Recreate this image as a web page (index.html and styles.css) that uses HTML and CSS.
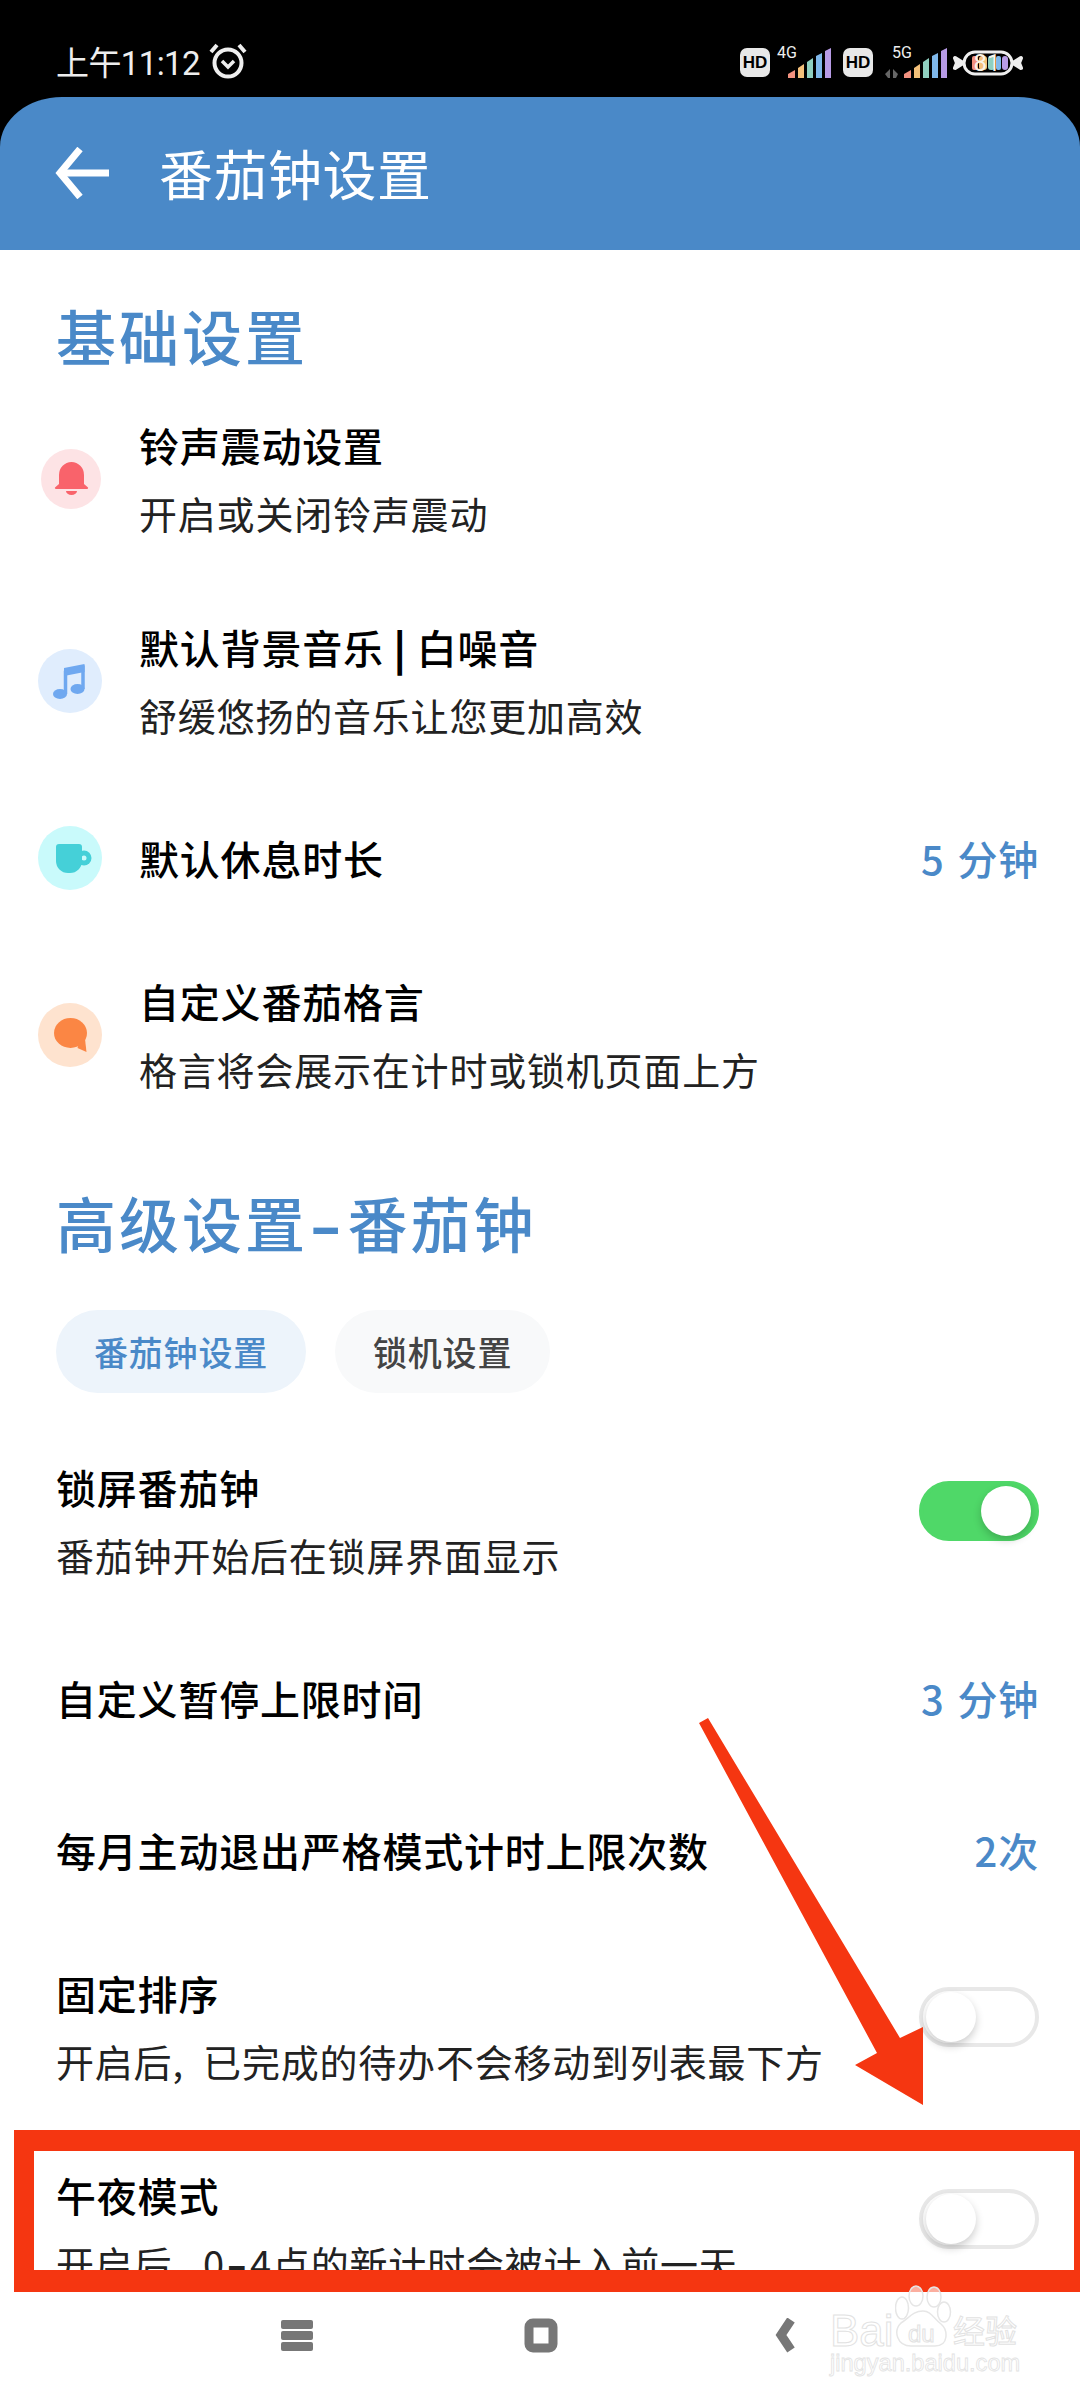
FILE: index.html
```html
<!DOCTYPE html>
<html lang="zh-CN">
<head>
    <meta charset="UTF-8">
    <meta name="viewport" content="width=device-width, initial-scale=1.0">
    <title>番茄钟设置</title>
    <link rel="stylesheet" href="styles.css">
</head>
<body>
    <div class="top">
        <div class="status-bar">
            <div class="status-left">
                <span class="clock">上午11:12</span>
                <svg class="alarm" width="40" height="38" viewBox="0 0 40 38" fill="none" stroke="#eee">
                    <circle cx="20" cy="21" r="13.5" stroke-width="4"/>
                    <path d="M14 19l6 6 6-6" stroke-width="3.5"/>
                    <path d="M3 10L9 3M37 10L31 3" stroke-width="4"/>
                </svg>
            </div>
            <div class="status-right">
                <span class="hd">HD</span>
                <div class="signal">
                    <span class="net">4G</span>
                    <svg width="54" height="30" viewBox="0 0 54 30">
                        <path d="M11 30v-4l7-4v8z" fill="#f2917f"/>
                        <path d="M21 30V20l6-4v14z" fill="#f4c07a"/>
                        <path d="M30 30V14l6-4v20z" fill="#8fd0c0"/>
                        <path d="M39 30V8l6-3v25z" fill="#7fb8ea"/>
                        <path d="M48 30V3l6-3v30z" fill="#b79be6"/>
                    </svg>
                </div>
                <span class="hd hd-second">HD</span>
                <div class="signal">
                    <span class="net net-five">5G</span>
                    <svg width="62" height="30" viewBox="0 0 62 30">
                        <path d="M0 26l5-5v9H3zM8 21l5 5-2 4H8z" fill="#666"/>
                        <path d="M19 30v-4l7-4v8z" fill="#f2917f"/>
                        <path d="M29 30V20l6-4v14z" fill="#f4c07a"/>
                        <path d="M38 30V14l6-4v20z" fill="#8fd0c0"/>
                        <path d="M47 30V8l6-3v25z" fill="#7fb8ea"/>
                        <path d="M56 30V3l6-3v30z" fill="#b79be6"/>
                    </svg>
                </div>
                <div class="battery">
                    <svg width="70" height="26" viewBox="0 0 70 26">
                        <path d="M10 13L2 8l2 5-2 5zM60 13l8-5-2 5 2 5z" fill="#eee" stroke="#eee" stroke-width="4" stroke-linejoin="round"/>
                        <rect x="11" y="2" width="48" height="22" rx="11" fill="#000" stroke="#eee" stroke-width="3"/>
                        <rect x="19" y="6" width="6" height="14" rx="2" fill="#f2917f"/>
                        <rect x="26" y="6" width="8" height="14" rx="3" fill="#f4c07a"/>
                        <rect x="35" y="6" width="7" height="14" rx="3" fill="#8fd0c0"/>
                        <rect x="43" y="6" width="5" height="14" rx="2" fill="#7fb8ea"/>
                        <rect x="49" y="6" width="6" height="14" rx="3" fill="#b79be6"/>
                        <text x="34" y="21" class="level">81</text>
                    </svg>
                </div>
            </div>
        </div>
        <div class="header">
            <svg width="54" height="52" viewBox="0 0 54 52" fill="none" stroke="#fff" stroke-width="7">
                <path d="M54 26H5"/>
                <path d="M25 2L5 26l20 24"/>
            </svg>
            <span class="header-title">番茄钟设置</span>
        </div>
    </div>

    <div class="content">
        <div class="section-title">基础设置</div>

        <div class="row row-icon">
            <svg class="icon" width="64" height="64" viewBox="0 0 64 64">
                <circle cx="33" cy="32" r="30" fill="#fde3e5"/>
                <path d="M21 37v-9a12.5 13 0 0 1 25 0v9l4 3.5a1 1 0 0 1-1 1.5H18a1 1 0 0 1-1-1.5z" fill="#f9636b"/>
                <path d="M28 44h11a5.5 4 0 0 1-11 0z" fill="#f9636b"/>
            </svg>
            <div class="row-text">
                <div class="row-title">铃声震动设置</div>
                <div class="row-sub">开启或关闭铃声震动</div>
            </div>
        </div>

        <div class="row row-icon">
            <svg class="icon" width="64" height="64" viewBox="0 0 64 64">
                <circle cx="32" cy="32" r="32" fill="#e0edfd"/>
                <ellipse cx="22" cy="45" rx="7" ry="5" fill="#6fa8f0"/>
                <ellipse cx="39.500" cy="40" rx="7" ry="5" fill="#6fa8f0"/>
                <path d="M27.500 45V23L45 18.500V40" fill="none" stroke="#6fa8f0" stroke-width="3.500"/>
                <path d="M26 19l20.500-4v8L26 27z" fill="#6fa8f0"/>
            </svg>
            <div class="row-text">
                <div class="row-title">默认背景音乐 <span class="pipe">|</span> 白噪音</div>
                <div class="row-sub">舒缓悠扬的音乐让您更加高效</div>
            </div>
        </div>

        <div class="row row-icon row-single">
            <svg class="icon" width="64" height="64" viewBox="0 0 64 64">
                <circle cx="32" cy="32" r="32" fill="#c9fafb"/>
                <circle cx="46" cy="32" r="7.500" fill="#45d0d8"/>
                <circle cx="46" cy="32" r="2.500" fill="#c9fafb"/>
                <path d="M18 21a3 3 0 0 1 3-3h20a3 3 0 0 1 3 3v14a12 12 0 0 1-12 12h-2a12 12 0 0 1-12-12z" fill="#45d0d8"/>
            </svg>
            <div class="row-text">
                <div class="row-title">默认休息时长</div>
            </div>
            <span class="row-value">5 分钟</span>
        </div>

        <div class="row row-icon">
            <svg class="icon" width="64" height="64" viewBox="0 0 64 64">
                <circle cx="32" cy="32" r="32" fill="#fee3cf"/>
                <ellipse cx="32.500" cy="30" rx="16.500" ry="15" fill="#fb8644"/>
                <path d="M41 40l6-4 1.500 13-9-4z" fill="#fb8644"/>
            </svg>
            <div class="row-text">
                <div class="row-title">自定义番茄格言</div>
                <div class="row-sub">格言将会展示在计时或锁机页面上方</div>
            </div>
        </div>

        <div class="section-title section-second">高级设置<span class="dash">-</span>番茄钟</div>

        <div class="tabs">
            <span class="tab tab-active">番茄钟设置</span>
            <span class="tab">锁机设置</span>
        </div>

        <div class="row">
            <div class="row-text">
                <div class="row-title">锁屏番茄钟</div>
                <div class="row-sub">番茄钟开始后在锁屏界面显示</div>
            </div>
            <span class="toggle toggle-on"><span class="knob"></span></span>
        </div>

        <div class="row row-single">
            <div class="row-text">
                <div class="row-title">自定义暂停上限时间</div>
            </div>
            <span class="row-value">3 分钟</span>
        </div>

        <div class="row row-single">
            <div class="row-text">
                <div class="row-title">每月主动退出严格模式计时上限次数</div>
            </div>
            <span class="row-value">2次</span>
        </div>

        <div class="row">
            <div class="row-text">
                <div class="row-title">固定排序</div>
                <div class="row-sub">开启后<span class="comma">,</span> 已完成的待办不会移动到列表最下方</div>
            </div>
            <span class="toggle"><span class="knob"></span></span>
        </div>

        <div class="row">
            <div class="row-text">
                <div class="row-title">午夜模式</div>
                <div class="row-sub">开启后<span class="comma">,</span> 0<span class="dash">-</span>4点的新计时会被计入前一天</div>
            </div>
            <span class="toggle"><span class="knob"></span></span>
        </div>
    </div>

    <div class="nav">
        <svg width="36" height="36" viewBox="0 0 36 36" fill="#777">
            <rect x="2" y="2" width="32" height="9" rx="2"/>
            <rect x="2" y="13" width="32" height="9" rx="2"/>
            <rect x="2" y="24" width="32" height="9" rx="2"/>
        </svg>
        <svg width="36" height="36" viewBox="0 0 36 36" fill="none" stroke="#777" stroke-width="9">
            <rect x="6" y="5" width="24" height="25" rx="4"/>
        </svg>
        <svg width="36" height="36" viewBox="0 0 36 36" fill="none" stroke="#777" stroke-width="9">
            <path d="M24 2L14 17l10 15"/>
        </svg>
    </div>

    <!-- 标注层 -->
    <svg class="arrow" width="1080" height="2400" viewBox="0 0 1080 2400">
        <polygon points="699,1723 708,1718 900,2038 923,2027 923,2105 855,2065 877,2053" fill="#f53611"/>
    </svg>
    <div class="red-box"></div>
    <div class="watermark">
        <svg class="paw" width="57" height="63" viewBox="0 0 57 63" fill="rgba(255,255,255,0.6)" stroke="#e6e6e6" stroke-width="1.5">
            <ellipse cx="21" cy="11" rx="7" ry="10"/>
            <ellipse cx="39" cy="12" rx="7" ry="10"/>
            <ellipse cx="7" cy="23" rx="6.500" ry="11"/>
            <ellipse cx="49" cy="27" rx="6.500" ry="10"/>
            <path d="M28 26c8 0 11 8 18 13 7 6 8 22-6 22H16C2 61-2 46 6 38c8-5 12-12 22-12z"/>
        </svg>
        <span class="wm-bai">Bai</span>
        <span class="wm-du">du</span>
        <span class="wm-cn">经验</span>
        <span class="wm-url">jingyan.baidu.com</span>
    </div>
</body>
</html>
```

FILE: styles.css
```css
html, body {
    margin: 0;
    height: 100%;
}

body {
    position: relative;
    display: flex;
    flex-direction: column;
    width: 1080px;
    height: 2400px;
    overflow: hidden;
    background-color: #fff;
    color: #000;
    font-family: "Noto Sans CJK SC", sans-serif;
}

.top {
    background-color: #000;
}

.status-bar {
    display: flex;
    justify-content: space-between;
    align-items: center;
    height: 97px;
    padding: 28px 57px 0 56px;
    box-sizing: border-box;
}

.status-left {
    display: flex;
    align-items: center;
    gap: 8px;
}

.clock {
    margin-top: 2px;
    color: #eee;
    font-family: Roboto, "Noto Sans CJK SC", sans-serif;
    font-size: 33px;
    line-height: 38px;
    letter-spacing: -0.6px;
}

.alarm {
    margin-top: -4px;
}

.status-right {
    display: flex;
    align-items: center;
    height: 30px;
}

.hd {
    width: 30px;
    height: 29px;
    margin-right: 7px;
    border-radius: 7px;
    background-color: #e8e8e8;
    color: #000;
    font-family: "Liberation Sans", sans-serif;
    font-size: 17px;
    font-weight: 700;
    line-height: 29px;
    text-align: center;
}

.hd-second {
    margin-left: 12px;
    margin-right: 12px;
}

.signal {
    position: relative;
    display: flex;
}

.net {
    position: absolute;
    top: -4px;
    left: 0;
    color: #eee;
    font-family: Roboto, sans-serif;
    font-size: 16px;
    line-height: 18px;
}

.net-five {
    left: 7px;
}

.battery {
    display: flex;
    margin-left: 6px;
}

.level {
    fill: #f8f4e8;
    font-family: Roboto, sans-serif;
    font-size: 24px;
    text-anchor: middle;
}

.header {
    display: flex;
    align-items: center;
    gap: 50px;
    height: 153px;
    padding: 0 0 2px 55px;
    box-sizing: border-box;
    border-radius: 62px 62px 0 0 / 50px 50px 0 0;
    background-color: #4a89c8;
}

.header-title {
    color: #fff;
    font-size: 54px;
    line-height: 60px;
    letter-spacing: 0.5px;
}

.content {
    flex: 1;
    overflow: hidden;
    padding-top: 41px;
}

.section-title {
    padding-left: 56px;
    color: #4a89c8;
    font-size: 60px;
    font-weight: 500;
    line-height: 87px;
    letter-spacing: 3px;
}

.section-second {
    margin-top: 42px;
}

.dash {
    display: inline-block;
    width: 0.66em;
    font-weight: 700;
    text-align: center;
    transform: scaleX(1.5);
}

.pipe {
    font-weight: 900;
}

.comma {
    margin-right: 10px;
}

.row {
    display: flex;
    align-items: center;
    height: 202px;
    padding: 0 41px 0 56px;
    box-sizing: border-box;
}

.row-single {
    height: 152px;
}

.row-icon {
    padding-left: 38px;
}

.icon {
    flex-shrink: 0;
    margin-right: 37px;
}

.row-text {
    flex: 1;
}

.row-title {
    font-size: 40px;
    font-weight: 500;
    line-height: 48px;
    letter-spacing: 0.8px;
}

.row-sub {
    margin-top: 20px;
    color: #222;
    font-size: 38px;
    line-height: 48px;
    letter-spacing: 0.8px;
}

.row-value {
    color: #4a89c8;
    font-size: 40px;
    font-weight: 500;
    line-height: 48px;
    letter-spacing: 0.8px;
    word-spacing: 3px;
}

.tabs {
    display: flex;
    gap: 29px;
    margin: 45px 0 27px 56px;
}

.tab {
    height: 83px;
    padding: 0 38px;
    border-radius: 42px;
    background-color: #f8f9fa;
    color: #444;
    font-size: 34px;
    font-weight: 500;
    line-height: 83px;
    letter-spacing: 0.8px;
}

.tab-active {
    background-color: #edf4fb;
    color: #4a89c8;
}

.toggle {
    display: block;
    flex-shrink: 0;
    width: 120px;
    height: 60px;
    margin-top: -20px;
    padding: 1px 3px;
    border: 4px solid #e8e8e8;
    border-radius: 30px;
    box-sizing: border-box;
    background-color: #fff;
}

.knob {
    display: block;
    width: 50px;
    height: 50px;
    border-radius: 50%;
    background-color: #fff;
    box-shadow: 0 4px 8px rgba(0, 0, 0, 0.2);
}

.toggle-on {
    border-color: #4fd868;
    background-color: #4fd868;
}

.toggle-on .knob {
    margin-left: 55px;
}

.nav {
    position: relative;
    display: flex;
    justify-content: center;
    align-items: flex-start;
    gap: 208px;
    height: 108px;
    padding: 26px 0 0 2px;
    box-sizing: border-box;
    background-color: #fff;
}

.arrow {
    position: absolute;
    top: 0;
    left: 0;
}

.red-box {
    position: absolute;
    top: 2130px;
    left: 14px;
    right: 0;
    height: 162px;
    border-style: solid;
    border-color: #f53611;
    border-width: 21px 6px 22px 20px;
    box-sizing: border-box;
}

.watermark {
    position: absolute;
    top: 2285px;
    left: 830px;
    width: 192px;
    height: 92px;
    color: transparent;
    font-family: "Liberation Sans", sans-serif;
    -webkit-text-stroke: 1px #e2e2e2;
    white-space: nowrap;
}

.paw {
    position: absolute;
    top: 0;
    left: 65px;
}

.wm-bai {
    position: absolute;
    top: 26px;
    left: 0;
    font-size: 44px;
    line-height: 40px;
}

.wm-du {
    position: absolute;
    top: 36px;
    left: 78px;
    font-size: 24px;
    line-height: 26px;
}

.wm-cn {
    position: absolute;
    top: 26px;
    left: 123px;
    font-family: "Noto Sans CJK SC", sans-serif;
    font-size: 32px;
    line-height: 36px;
}

.wm-url {
    position: absolute;
    top: 66px;
    left: 0;
    font-size: 23.6px;
    line-height: 24px;
    -webkit-text-stroke-width: 0.8px;
}
```
